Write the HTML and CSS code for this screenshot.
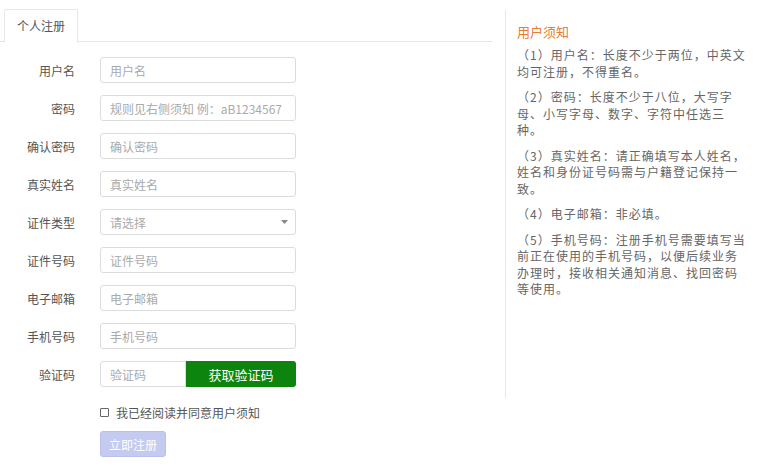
FILE: index.html
```html
<!DOCTYPE html>
<html lang="zh-CN">
<head>
<meta charset="utf-8">
<title>个人注册</title>
<link rel="stylesheet" href="styles.css">
</head>
<body>
<div class="page">
  <div class="left">
    <div class="tabs">
      <div class="tab">个人注册</div>
    </div>
    <form class="form">
      <div class="row"><label class="lbl">用户名</label><input class="inp" placeholder="用户名"></div>
      <div class="row"><label class="lbl">密码</label><input class="inp" placeholder="规则见右侧须知 例：aB1234567"></div>
      <div class="row"><label class="lbl">确认密码</label><input class="inp" placeholder="确认密码"></div>
      <div class="row"><label class="lbl">真实姓名</label><input class="inp" placeholder="真实姓名"></div>
      <div class="row"><label class="lbl">证件类型</label>
        <div class="select"><span>请选择</span>
          <svg class="caret" width="7" height="4" viewBox="0 0 7 4"><path d="M0 0h7L3.5 4z" fill="#888"/></svg>
        </div>
      </div>
      <div class="row"><label class="lbl">证件号码</label><input class="inp" placeholder="证件号码"></div>
      <div class="row"><label class="lbl">电子邮箱</label><input class="inp" placeholder="电子邮箱"></div>
      <div class="row"><label class="lbl">手机号码</label><input class="inp" placeholder="手机号码"></div>
      <div class="row"><label class="lbl">验证码</label>
        <div class="code">
          <input class="inp inp-code" placeholder="验证码">
          <button type="button" class="btn-code">获取验证码</button>
        </div>
      </div>
      <div class="agree"><span class="box"></span><span>我已经阅读并同意用户须知</span></div>
      <button type="button" class="submit">立即注册</button>
    </form>
  </div>
  <div class="right">
    <div class="title">用户须知</div>
    <p>（1）用户名：长度不少于两位，中英文均可注册，不得重名。</p>
    <p>（2）密码：长度不少于八位，大写字母、小写字母、数字、字符中任选三种。</p>
    <p>（3）真实姓名：请正确填写本人姓名，姓名和身份证号码需与户籍登记保持一致。</p>
    <p>（4）电子邮箱：非必填。</p>
    <p>（5）手机号码：注册手机号需要填写当前正在使用的手机号码，以便后续业务办理时，接收相关通知消息、找回密码等使用。</p>
  </div>
</div>
</body>
</html>
```
FILE: styles.css
```css
html, body {
  margin: 0;
  padding: 0;
  background: #fff;
}
body {
  font-family: "Noto Sans CJK SC", "Noto Sans", sans-serif;
  font-size: 12px;
  color: #555;
}
.page {
  display: flex;
  align-items: flex-start;
}
.left {
  width: 492px;
}
.tabs {
  height: 41px;
  border-bottom: 1px solid #e6e6e6;
  display: flex;
  align-items: flex-end;
}
.tab {
  margin-left: 4px;
  height: 32px;
  line-height: 32px;
  padding: 0 12px;
  border: 1px solid #e6e6e6;
  border-bottom: none;
  border-radius: 2px 2px 0 0;
  background: #fff;
  margin-bottom: -1px;
  color: #555;
}
.form {
  padding-top: 15px;
  margin: 0;
}
.row {
  display: flex;
  align-items: center;
  height: 26px;
  margin-bottom: 12px;
}
.lbl {
  width: 75px;
  text-align: right;
  margin-right: 25px;
  color: #555;
}
.inp {
  box-sizing: border-box;
  width: 196px;
  height: 26px;
  border: 1px solid #dcdcdc;
  border-radius: 3px;
  padding: 0 9px;
  font-family: inherit;
  font-size: 12px;
  color: #555;
  outline: none;
}
.inp::placeholder {
  color: #aaa;
}
.select {
  box-sizing: border-box;
  width: 196px;
  height: 26px;
  border: 1px solid #dcdcdc;
  border-radius: 3px;
  padding: 0 7px 0 9px;
  display: flex;
  align-items: center;
  justify-content: space-between;
  color: #aaa;
}
.code {
  display: flex;
  width: 196px;
  height: 26px;
}
.inp-code {
  width: 86px;
  border-radius: 3px 0 0 3px;
}
.btn-code {
  flex: 1;
  height: 26px;
  border: none;
  border-radius: 0 3px 3px 0;
  background: #0d840d;
  color: #fff;
  font-family: inherit;
  font-size: 13px;
  padding: 0;
}
.agree {
  display: flex;
  align-items: center;
  margin: 17px 0 0 100px;
  height: 16px;
  color: #555;
}
.box {
  box-sizing: border-box;
  width: 9px;
  height: 9px;
  border: 1px solid #666;
  border-radius: 1px;
  margin-right: 7px;
}
.submit {
  display: block;
  margin: 11px 0 0 100px;
  width: 66px;
  height: 26px;
  border: 1px solid #b9c0ec;
  border-radius: 3px;
  background: #c4caf0;
  color: #fff;
  font-family: inherit;
  font-size: 12px;
  padding: 0;
}
.right {
  margin-left: 13px;
  margin-top: 10px;
  height: 375px;
  width: 231px;
  border-left: 1px solid #e6e6e6;
  padding: 13px 0 0 11px;
  box-sizing: content-box;
}
.title {
  font-size: 13px;
  line-height: 18px;
  color: #ec7b33;
  margin-bottom: 6px;
}
.right p {
  margin: 0 0 9px;
  line-height: 16.5px;
  letter-spacing: 1px;
  color: #666;
}
```
